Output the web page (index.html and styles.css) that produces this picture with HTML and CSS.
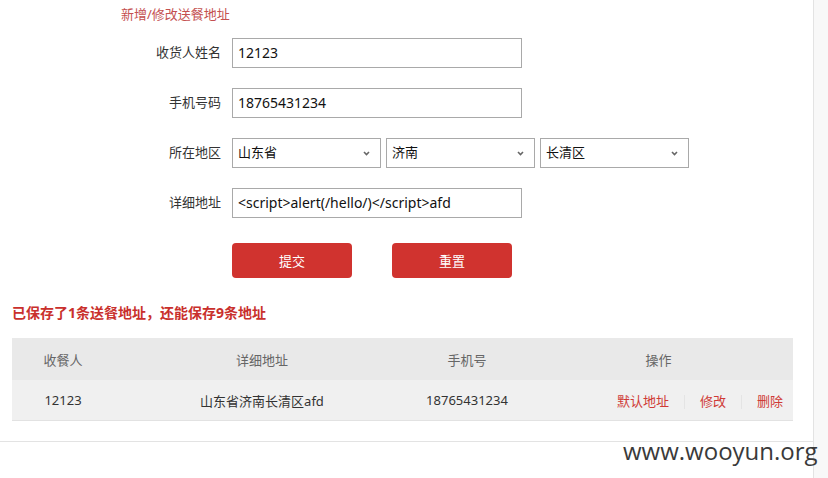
FILE: index.html
```html
<!DOCTYPE html>
<html lang="zh-CN">
<head>
    <meta charset="UTF-8">
    <title>送餐地址</title>
    <link rel="stylesheet" href="styles.css">
</head>
<body>
    <div class="page">
        <div class="main">
            <h3 class="form-title">新增/修改送餐地址</h3>
            <form class="addr-form">
                <div class="form-row">
                    <label>收货人姓名</label>
                    <input type="text" class="txt" value="12123">
                </div>
                <div class="form-row">
                    <label>手机号码</label>
                    <input type="text" class="txt" value="18765431234">
                </div>
                <div class="form-row">
                    <label>所在地区</label>
                    <div class="selects">
                        <select><option>山东省</option></select>
                        <select><option>济南</option></select>
                        <select><option>长清区</option></select>
                    </div>
                </div>
                <div class="form-row">
                    <label>详细地址</label>
                    <input type="text" class="txt" value="<script>alert(/hello/)</script>afd">
                </div>
                <div class="form-btns">
                    <button type="button" class="btn">提交</button>
                    <button type="reset" class="btn">重置</button>
                </div>
            </form>

            <p class="saved-tip">已保存了1条送餐地址，还能保存9条地址</p>

            <div class="list-wrap">
                <table class="addr-list">
                    <colgroup>
                        <col style="width: 102px">
                        <col style="width: 296px">
                        <col style="width: 114px">
                        <col>
                    </colgroup>
                    <thead>
                        <tr>
                            <th>收餐人</th>
                            <th>详细地址</th>
                            <th>手机号</th>
                            <th>操作</th>
                        </tr>
                    </thead>
                    <tbody>
                        <tr>
                            <td>12123</td>
                            <td>山东省济南长清区afd</td>
                            <td>18765431234</td>
                            <td class="ops">
                                <a href="#">默认地址</a><span class="sep"></span><a href="#">修改</a><span class="sep"></span><a href="#">删除</a>
                            </td>
                        </tr>
                    </tbody>
                </table>
            </div>
        </div>
        <div class="side"></div>
        <div class="watermark">www.wooyun.org</div>
    </div>
</body>
</html>
```

FILE: styles.css
```css
html, body {
    margin: 0;
    padding: 0;
    height: 100%;
}
body {
    font-family: "Noto Sans", "Noto Sans CJK SC", sans-serif;
    font-size: 13px;
    color: #333;
    background: #fff;
}
.page {
    display: flex;
    height: 478px;
    position: relative;
    overflow: hidden;
}
.main {
    width: 813px;
    border-right: 1px solid #e3e3e3;
}
.side {
    flex: 1;
    background: #f8f8f8;
}
.form-title {
    margin: 0;
    padding: 5px 0 0 121px;
    height: 33px;
    font-size: 13px;
    font-weight: normal;
    line-height: 18px;
    color: #c4504f;
}
.form-row {
    display: flex;
    align-items: center;
    height: 30px;
    margin-bottom: 20px;
}
.form-row label {
    width: 221px;
    padding: 0 11px 3px 0;
    text-align: right;
    color: #333;
}
.txt {
    box-sizing: border-box;
    width: 290px;
    height: 30px;
    padding: 0 5px 2px;
    border: 1px solid #a9a9a9;
    font-family: "Noto Sans", "Noto Sans CJK SC", sans-serif;
    font-size: 14px;
    color: #111;
    outline: none;
}
.selects {
    display: flex;
    gap: 5px;
}
.selects select {
    box-sizing: border-box;
    width: 149px;
    height: 30px;
    padding: 0 5px 2px;
    border: 1px solid #a9a9a9;
    border-radius: 0;
    font-family: "Noto Sans", "Noto Sans CJK SC", sans-serif;
    font-size: 13px;
    color: #111;
    background: #fff url("data:image/svg+xml,%3Csvg xmlns='http://www.w3.org/2000/svg' width='7' height='5'%3E%3Cpath d='M1 1l2.5 2.5 2.5-2.5' fill='none' stroke='%23666' stroke-width='1.6'/%3E%3C/svg%3E") no-repeat right 10px center;
    appearance: none;
    -webkit-appearance: none;
}
.form-btns {
    display: flex;
    gap: 40px;
    padding: 5px 0 0 232px;
}
.btn {
    width: 120px;
    height: 35px;
    border: none;
    border-radius: 4px;
    background: #d0332f;
    color: #fff;
    font-family: "Noto Sans", "Noto Sans CJK SC", sans-serif;
    font-size: 13px;
    cursor: pointer;
}
.saved-tip {
    margin: 25px 0 0 12px;
    font-size: 14px;
    font-weight: bold;
    line-height: 20px;
    color: #c9302c;
}
.list-wrap {
    padding: 15px 20px 20px 12px;
    border-bottom: 1px solid #e3e3e3;
}
.addr-list {
    width: 781px;
    border-collapse: collapse;
    table-layout: fixed;
}
.addr-list th {
    height: 42px;
    padding: 0;
    background: #e9e9e9;
    font-weight: normal;
    color: #666;
    text-align: center;
}
.addr-list td {
    height: 40px;
    padding: 0;
    background: #f0f0f0;
    border-bottom: 1px solid #e2e2e2;
    text-align: center;
    color: #333;
}
.addr-list td.ops {
    text-align: right;
    padding-right: 10px;
}
.ops a {
    color: #cf3a36;
    text-decoration: none;
}
.ops .sep {
    display: inline-block;
    width: 1px;
    height: 14px;
    margin: 0 15px;
    background: #e4e4e4;
    vertical-align: middle;
}
.watermark {
    position: absolute;
    left: 623px;
    top: 434px;
    font-family: "Open Sans", sans-serif;
    font-size: 24px;
    color: #3a3a3a;
}
```
